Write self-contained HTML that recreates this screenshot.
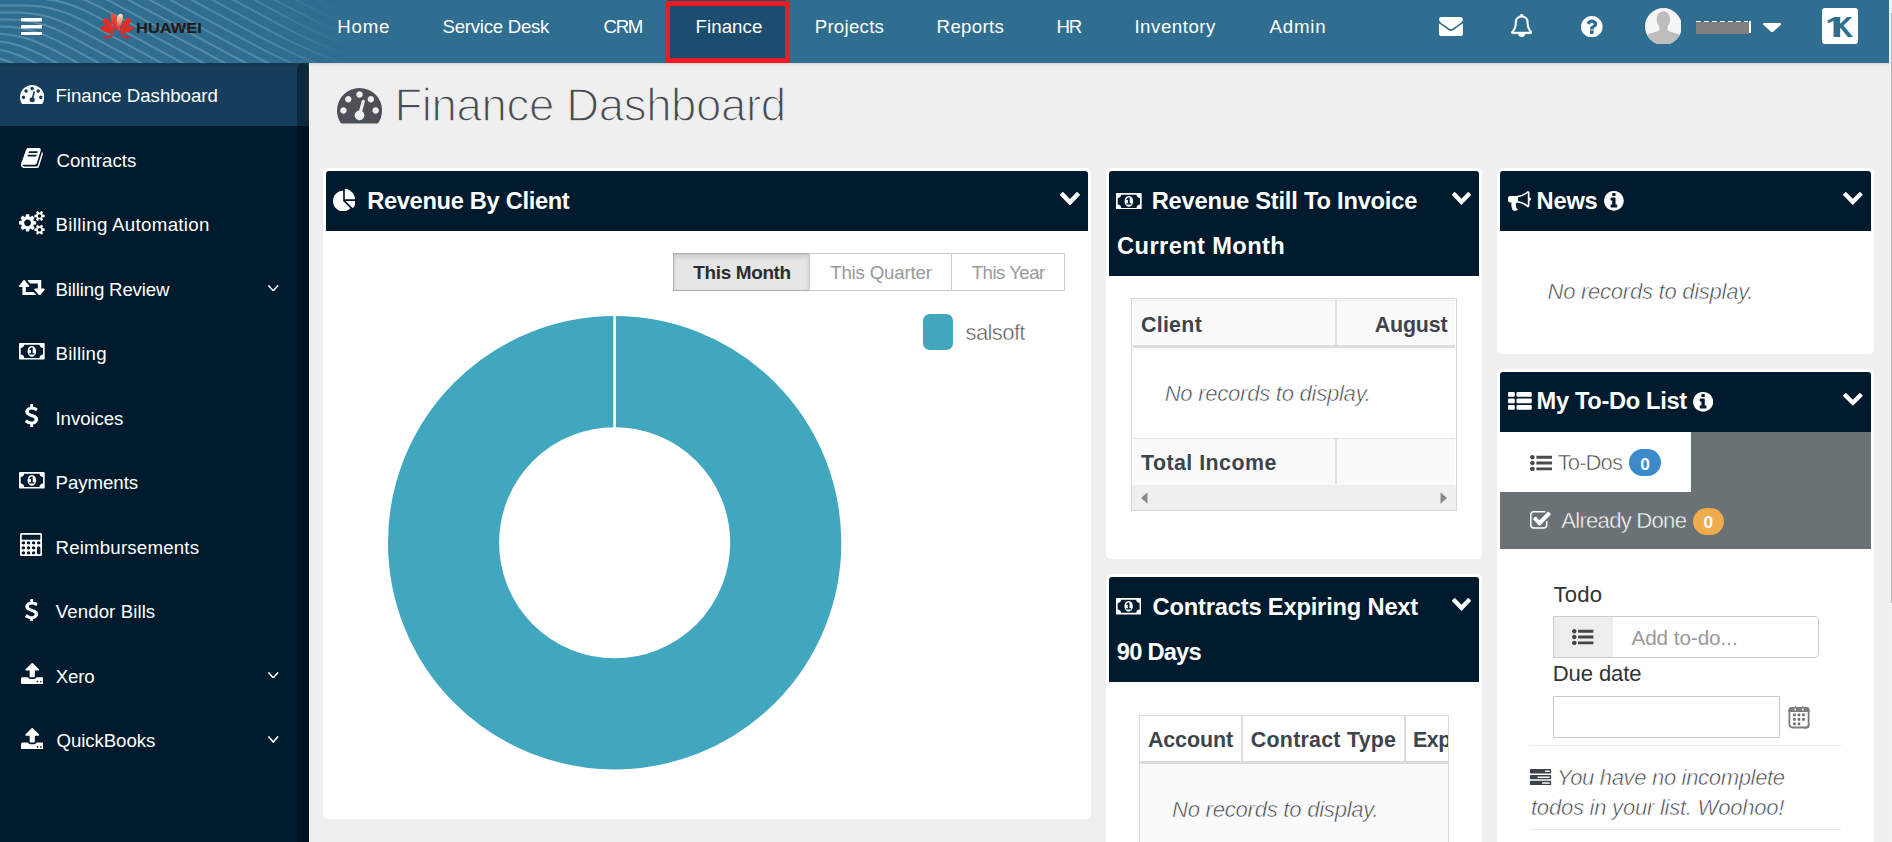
<!DOCTYPE html>
<html lang="en"><head><meta charset="utf-8"><title>Finance Dashboard</title>
<style>
html,body{margin:0;padding:0}
body{width:1892px;height:842px;overflow:hidden;position:relative;background:#efefef;font-family:"Liberation Sans",Arial,sans-serif}
.abs,.t,.ic,.pnl,.ph,.btn{position:absolute;box-sizing:border-box}
.ic{display:block;overflow:hidden}
.t{white-space:nowrap;margin:0;padding:0;display:block;text-decoration:none}
#hdr{position:absolute;left:0;top:0;width:1889px;height:63px;background:#2f6e91;box-shadow:0 1px 3px rgba(0,0,0,.14)}
#side{position:absolute;left:0;top:63px;width:309px;height:779px;background:#001b2e}
#edge{position:absolute;left:1889px;top:0;width:3px;height:842px;background:#f1f1f1}
.pnl{background:#fff;border-radius:5px}
.ph{background:#001b2e;border-radius:3px 3px 0 0}
.btn{background:#fff;border:1px solid #ccc;box-sizing:content-box}
.btn.on{background:#e6e6e6;border-color:#adadad;box-shadow:inset 0 3px 5px rgba(0,0,0,.125)}
.thin{-webkit-text-stroke:1.35px #efefef}
</style></head>
<body>
<main id="main"><svg class="ic" style="left:337.3px;top:88.4px;width:45.1px;height:35.4px;" viewBox="0 -1280 1792 1408" preserveAspectRatio="none"><path fill="#4d5157" transform="scale(1,-1)" d="M384 384q0 53 -37.5 90.5t-90.5 37.5t-90.5 -37.5t-37.5 -90.5t37.5 -90.5t90.5 -37.5t90.5 37.5t37.5 90.5zM576 832q0 53 -37.5 90.5t-90.5 37.5t-90.5 -37.5t-37.5 -90.5t37.5 -90.5t90.5 -37.5t90.5 37.5t37.5 90.5zM1004 351l101 382q6 26 -7.5 48.5t-38.5 29.5 t-48 -6.5t-30 -39.5l-101 -382q-60 -5 -107 -43.5t-63 -98.5q-20 -77 20 -146t117 -89t146 20t89 117q16 60 -6 117t-72 91zM1664 384q0 53 -37.5 90.5t-90.5 37.5t-90.5 -37.5t-37.5 -90.5t37.5 -90.5t90.5 -37.5t90.5 37.5t37.5 90.5zM1024 1024q0 53 -37.5 90.5 t-90.5 37.5t-90.5 -37.5t-37.5 -90.5t37.5 -90.5t90.5 -37.5t90.5 37.5t37.5 90.5zM1472 832q0 53 -37.5 90.5t-90.5 37.5t-90.5 -37.5t-37.5 -90.5t37.5 -90.5t90.5 -37.5t90.5 37.5t37.5 90.5zM1792 384q0 -261 -141 -483q-19 -29 -54 -29h-1402q-35 0 -54 29 q-141 221 -141 483q0 182 71 348t191 286t286 191t348 71t348 -71t286 -191t191 -286t71 -348z"/></svg>
<h1 class="t thin" style="left:394.4px;top:76px;font-size:45.54px;line-height:60px;color:#474c54;letter-spacing:-0.35px;font-weight:400;">Finance Dashboard</h1>
<section>
<div class="pnl" style="left:323px;top:168px;width:768px;height:651px"></div><div class="ph" style="left:326px;top:171px;width:762px;height:60px"></div>
<svg class="ic" style="left:332.7px;top:188.9px;width:22.8px;height:22.3px;" viewBox="0 -1536 1728 1664" preserveAspectRatio="none"><path fill="#fff" transform="scale(1,-1)" d="M768 646l546 -546q-106 -108 -247.5 -168t-298.5 -60q-209 0 -385.5 103t-279.5 279.5t-103 385.5t103 385.5t279.5 279.5t385.5 103v-762zM955 640h773q0 -157 -60 -298.5t-168 -247.5zM1664 768h-768v768q209 0 385.5 -103t279.5 -279.5t103 -385.5z"/></svg>
<h3 class="t" style="left:367.2px;top:186px;font-size:23.69px;line-height:31px;color:#fff;letter-spacing:-0.34px;font-weight:700;">Revenue By Client</h3>
<svg class="ic" style="left:1060px;top:191.6px;width:19.9px;height:13.2px;" viewBox="90 -1003 1612 1035" preserveAspectRatio="none"><path fill="#fff" transform="scale(1,-1)" d="M1683 728l-742 -741q-19 -19 -45 -19t-45 19l-742 741q-19 19 -19 45.5t19 45.5l166 165q19 19 45 19t45 -19l531 -531l531 531q19 19 45 19t45 -19l166 -165q19 -19 19 -45.5t-19 -45.5z"/></svg>
<div class="btn on" style="left:673px;top:253px;width:135px;height:36px"></div>
<div class="btn" style="left:809px;top:253px;width:142px;height:36px"></div>
<div class="btn" style="left:951px;top:253px;width:112px;height:36px"></div>
<div class="t" style="left:693.3px;top:260px;font-size:18.95px;line-height:25px;color:#2c2c2c;letter-spacing:-0.35px;font-weight:700;">This Month</div>
<div class="t" style="left:830.2px;top:260px;font-size:18.67px;line-height:25px;color:#999;letter-spacing:-0.17px;">This Quarter</div>
<div class="t" style="left:971.7px;top:260px;font-size:18.67px;line-height:25px;color:#999;letter-spacing:-0.53px;">This Year</div>
<div class="abs" style="left:923px;top:314px;width:30px;height:36px;border-radius:6.5px;background:#40a7bf"></div>
<div class="t" style="left:965.6px;top:318px;font-size:22.08px;line-height:29px;color:#4a4a4a;letter-spacing:-0.65px;-webkit-text-stroke:0.55px #fff;">salsoft</div>
<svg class="ic" style="left:380px;top:308px;width:470px;height:470px" viewBox="380 308 470 470"><circle cx="614.65" cy="542.75" r="171.1" fill="none" stroke="#40a7bf" stroke-width="111.1"/><rect x="613.3" y="314" width="2.6" height="114" fill="#fff"/></svg>
</section>
<section>
<div class="pnl" style="left:1106px;top:168px;width:376px;height:391px"></div><div class="ph" style="left:1109px;top:171px;width:370px;height:105px"></div>
<svg class="ic" style="left:1115.9px;top:192.8px;width:25.7px;height:16.6px;" viewBox="0 -1280 1920 1280" preserveAspectRatio="none"><path fill="#fff" transform="scale(1,-1)" d="M768 384h384v96h-128v448h-114l-148 -137l77 -80q42 37 55 57h2v-288h-128v-96zM1280 640q0 -70 -21 -142t-59.5 -134t-101.5 -101t-138 -39t-138 39t-101.5 101t-59.5 134t-21 142t21 142t59.5 134t101.5 101t138 39t138 -39t101.5 -101t59.5 -134t21 -142zM1792 384 v512q-106 0 -181 75t-75 181h-1152q0 -106 -75 -181t-181 -75v-512q106 0 181 -75t75 -181h1152q0 106 75 181t181 75zM1920 1216v-1152q0 -26 -19 -45t-45 -19h-1792q-26 0 -45 19t-19 45v1152q0 26 19 45t45 19h1792q26 0 45 -19t19 -45z"/></svg>
<h3 class="t" style="left:1151.7px;top:186px;font-size:23.69px;line-height:31px;color:#fff;letter-spacing:-0.22px;font-weight:700;">Revenue Still To Invoice</h3>
<div class="t" style="left:1117.1px;top:231px;font-size:23.69px;line-height:31px;color:#fff;letter-spacing:0.38px;font-weight:700;">Current Month</div>
<svg class="ic" style="left:1452px;top:192.1px;width:19px;height:12.7px;" viewBox="90 -1003 1612 1035" preserveAspectRatio="none"><path fill="#fff" transform="scale(1,-1)" d="M1683 728l-742 -741q-19 -19 -45 -19t-45 19l-742 741q-19 19 -19 45.5t19 45.5l166 165q19 19 45 19t45 -19l531 -531l531 531q19 19 45 19t45 -19l166 -165q19 -19 19 -45.5t-19 -45.5z"/></svg>
<div class="abs" style="left:1131px;top:298px;width:326px;height:212.5px;border:1px solid #d6d6d6;background:#fff"></div>
<div class="abs" style="left:1133px;top:300px;width:322px;height:46px;background:#fafafa;border-top:1px solid #e8e8e8"></div>
<div class="abs" style="left:1133px;top:345.4px;width:322px;height:2.4px;background:#dcdcdc"></div>
<div class="abs" style="left:1335px;top:300px;width:2px;height:46px;background:#dedede"></div>
<div class="abs" style="left:1133px;top:438px;width:322px;height:46.5px;background:#fafafa;border-top:1px solid #dedede"></div>
<div class="abs" style="left:1335px;top:438px;width:2px;height:46px;background:#dedede"></div>
<div class="abs" style="left:1132px;top:484.6px;width:324px;height:25.4px;background:#efefef"></div>
<svg class="ic" style="left:1132px;top:484.6px;width:324px;height:25.4px" viewBox="0 0 324 25.4"><path fill="#8a8a8a" d="M15.4 7.3 v11.4 l-6.400-5.700z M308.6 7.3 v11.4 l6.400-5.700z"/></svg>
<div class="t" style="left:1140.9px;top:311px;font-size:21.4px;line-height:28px;color:#3c444c;letter-spacing:0.3px;font-weight:700;">Client</div>
<div class="t" style="left:1374.8px;top:311px;font-size:21.4px;line-height:28px;color:#3c444c;letter-spacing:-0.17px;font-weight:700;">August</div>
<div class="t" style="left:1164.7px;top:379px;font-size:22.08px;line-height:29px;color:#3f454b;letter-spacing:-0.27px;font-style:italic;-webkit-text-stroke:0.55px #fff;">No records to display.</div>
<div class="t" style="left:1141px;top:449px;font-size:21.4px;line-height:28px;color:#3c444c;letter-spacing:0.45px;font-weight:700;">Total Income</div>
</section>
<section>
<div class="pnl" style="left:1106px;top:574px;width:376px;height:286px"></div><div class="ph" style="left:1109px;top:577px;width:370px;height:105px"></div>
<svg class="ic" style="left:1116.1px;top:598.3px;width:25.3px;height:16.5px;" viewBox="0 -1280 1920 1280" preserveAspectRatio="none"><path fill="#fff" transform="scale(1,-1)" d="M768 384h384v96h-128v448h-114l-148 -137l77 -80q42 37 55 57h2v-288h-128v-96zM1280 640q0 -70 -21 -142t-59.5 -134t-101.5 -101t-138 -39t-138 39t-101.5 101t-59.5 134t-21 142t21 142t59.5 134t101.5 101t138 39t138 -39t101.5 -101t59.5 -134t21 -142zM1792 384 v512q-106 0 -181 75t-75 181h-1152q0 -106 -75 -181t-181 -75v-512q106 0 181 -75t75 -181h1152q0 106 75 181t181 75zM1920 1216v-1152q0 -26 -19 -45t-45 -19h-1792q-26 0 -45 19t-19 45v1152q0 26 19 45t45 19h1792q26 0 45 -19t19 -45z"/></svg>
<h3 class="t" style="left:1152.6px;top:592px;font-size:23.69px;line-height:31px;color:#fff;letter-spacing:-0.19px;font-weight:700;">Contracts Expiring Next</h3>
<div class="t" style="left:1116.8px;top:637px;font-size:23.69px;line-height:31px;color:#fff;letter-spacing:-0.78px;font-weight:700;">90 Days</div>
<svg class="ic" style="left:1452px;top:598.3px;width:19px;height:12.7px;" viewBox="90 -1003 1612 1035" preserveAspectRatio="none"><path fill="#fff" transform="scale(1,-1)" d="M1683 728l-742 -741q-19 -19 -45 -19t-45 19l-742 741q-19 19 -19 45.5t19 45.5l166 165q19 19 45 19t45 -19l531 -531l531 531q19 19 45 19t45 -19l166 -165q19 -19 19 -45.5t-19 -45.5z"/></svg>
<div class="abs" style="left:1139px;top:715px;width:310px;height:140px;border:1px solid #dcdcdc;background:#fafafa"></div>
<div class="abs" style="left:1140px;top:716px;width:308px;height:45px;background:#fff"></div>
<div class="abs" style="left:1140px;top:761px;width:308px;height:2.6px;background:#dcdcdc"></div>
<div class="abs" style="left:1241px;top:716px;width:1.6px;height:45px;background:#dedede"></div>
<div class="abs" style="left:1404px;top:716px;width:1.6px;height:45px;background:#dedede"></div>
<div class="t" style="left:1147.9px;top:726px;font-size:21.4px;line-height:28px;color:#3c444c;letter-spacing:-0.06px;font-weight:700;">Account</div>
<div class="t" style="left:1250.8px;top:726px;font-size:21.4px;line-height:28px;color:#3c444c;letter-spacing:0.25px;font-weight:700;">Contract Type</div>
<div class="abs" style="left:1406px;top:716px;width:42px;height:45px;overflow:hidden"><div class="t" style="left:6.9px;top:10px;font-size:21.4px;line-height:28px;color:#3c444c;letter-spacing:-0.35px;font-weight:700;">Expiry</div></div>
<div class="t" style="left:1172px;top:795px;font-size:22.08px;line-height:29px;color:#3f454b;letter-spacing:-0.25px;font-style:italic;-webkit-text-stroke:0.55px #fafafa;">No records to display.</div>
</section>
<section>
<div class="pnl" style="left:1497px;top:168px;width:377px;height:186px"></div><div class="ph" style="left:1500px;top:171px;width:371px;height:60px"></div>
<svg class="ic" style="left:1507.8px;top:190.9px;width:23.1px;height:19.7px;" viewBox="0 -1408 1792 1537.2" preserveAspectRatio="none"><path fill="#fff" transform="scale(1,-1)" d="M1664 896q53 0 90.5 -37.5t37.5 -90.5t-37.5 -90.5t-90.5 -37.5v-384q0 -52 -38 -90t-90 -38q-417 347 -812 380q-58 -19 -91 -66t-31 -100.5t40 -92.5q-20 -33 -23 -65.5t6 -58t33.5 -55t48 -50t61.5 -50.5q-29 -58 -111.5 -83t-168.5 -11.5t-132 55.5q-7 23 -29.5 87.5 t-32 94.5t-23 89t-15 101t3.5 98.5t22 110.5h-122q-66 0 -113 47t-47 113v192q0 66 47 113t113 47h480q435 0 896 384q52 0 90 -38t38 -90v-384zM1536 292v954q-394 -302 -768 -343v-270q377 -42 768 -341z"/></svg>
<h3 class="t" style="left:1536.5px;top:186px;font-size:23.69px;line-height:31px;color:#fff;letter-spacing:-0.2px;font-weight:700;">News</h3>
<svg class="ic" style="left:1604px;top:190.9px;width:19.8px;height:19.7px;" viewBox="0 -1408 1536 1536" preserveAspectRatio="none"><path fill="#fff" transform="scale(1,-1)" d="M1024 160v160q0 14 -9 23t-23 9h-96v512q0 14 -9 23t-23 9h-320q-14 0 -23 -9t-9 -23v-160q0 -14 9 -23t23 -9h96v-320h-96q-14 0 -23 -9t-9 -23v-160q0 -14 9 -23t23 -9h448q14 0 23 9t9 23zM896 1056v160q0 14 -9 23t-23 9h-192q-14 0 -23 -9t-9 -23v-160q0 -14 9 -23 t23 -9h192q14 0 23 9t9 23zM1536 640q0 -209 -103 -385.5t-279.5 -279.5t-385.5 -103t-385.5 103t-279.5 279.5t-103 385.5t103 385.5t279.5 279.5t385.5 103t385.5 -103t279.5 -279.5t103 -385.5z"/></svg>
<svg class="ic" style="left:1843.3px;top:192.1px;width:19.7px;height:12.7px;" viewBox="90 -1003 1612 1035" preserveAspectRatio="none"><path fill="#fff" transform="scale(1,-1)" d="M1683 728l-742 -741q-19 -19 -45 -19t-45 19l-742 741q-19 19 -19 45.5t19 45.5l166 165q19 19 45 19t45 -19l531 -531l531 531q19 19 45 19t45 -19l166 -165q19 -19 19 -45.5t-19 -45.5z"/></svg>
<div class="t" style="left:1547.5px;top:277px;font-size:22.08px;line-height:29px;color:#3f454b;letter-spacing:-0.28px;font-style:italic;-webkit-text-stroke:0.55px #fff;">No records to display.</div>
</section>
<section>
<div class="pnl" style="left:1497px;top:369px;width:377px;height:491px"></div><div class="ph" style="left:1500px;top:372px;width:371px;height:60px"></div>
<svg class="ic" style="left:1507.8px;top:392.1px;width:23.8px;height:17.8px;" viewBox="0 -1408 1792 1408" preserveAspectRatio="none"><path fill="#fff" transform="scale(1,-1)" d="M512 288v-192q0 -40 -28 -68t-68 -28h-320q-40 0 -68 28t-28 68v192q0 40 28 68t68 28h320q40 0 68 -28t28 -68zM512 800v-192q0 -40 -28 -68t-68 -28h-320q-40 0 -68 28t-28 68v192q0 40 28 68t68 28h320q40 0 68 -28t28 -68zM1792 288v-192q0 -40 -28 -68t-68 -28h-960 q-40 0 -68 28t-28 68v192q0 40 28 68t68 28h960q40 0 68 -28t28 -68zM512 1312v-192q0 -40 -28 -68t-68 -28h-320q-40 0 -68 28t-28 68v192q0 40 28 68t68 28h320q40 0 68 -28t28 -68zM1792 800v-192q0 -40 -28 -68t-68 -28h-960q-40 0 -68 28t-28 68v192q0 40 28 68t68 28 h960q40 0 68 -28t28 -68zM1792 1312v-192q0 -40 -28 -68t-68 -28h-960q-40 0 -68 28t-28 68v192q0 40 28 68t68 28h960q40 0 68 -28t28 -68z"/></svg>
<h3 class="t" style="left:1536.5px;top:386px;font-size:23.69px;line-height:31px;color:#fff;letter-spacing:-0.35px;font-weight:700;">My To-Do List</h3>
<svg class="ic" style="left:1692.7px;top:392.1px;width:20.2px;height:19.7px;" viewBox="0 -1408 1536 1536" preserveAspectRatio="none"><path fill="#fff" transform="scale(1,-1)" d="M1024 160v160q0 14 -9 23t-23 9h-96v512q0 14 -9 23t-23 9h-320q-14 0 -23 -9t-9 -23v-160q0 -14 9 -23t23 -9h96v-320h-96q-14 0 -23 -9t-9 -23v-160q0 -14 9 -23t23 -9h448q14 0 23 9t9 23zM896 1056v160q0 14 -9 23t-23 9h-192q-14 0 -23 -9t-9 -23v-160q0 -14 9 -23 t23 -9h192q14 0 23 9t9 23zM1536 640q0 -209 -103 -385.5t-279.5 -279.5t-385.5 -103t-385.5 103t-279.5 279.5t-103 385.5t103 385.5t279.5 279.5t385.5 103t385.5 -103t279.5 -279.5t103 -385.5z"/></svg>
<svg class="ic" style="left:1843.3px;top:393.3px;width:19.7px;height:12.5px;" viewBox="90 -1003 1612 1035" preserveAspectRatio="none"><path fill="#fff" transform="scale(1,-1)" d="M1683 728l-742 -741q-19 -19 -45 -19t-45 19l-742 741q-19 19 -19 45.5t19 45.5l166 165q19 19 45 19t45 -19l531 -531l531 531q19 19 45 19t45 -19l166 -165q19 -19 19 -45.5t-19 -45.5z"/></svg>
<div class="abs" style="left:1500px;top:432px;width:371px;height:117px;background:#6a7275"></div>
<div class="abs" style="left:1500px;top:432px;width:191px;height:60px;background:#fff"></div>
<svg class="ic" style="left:1529.9px;top:454.6px;width:22.3px;height:16.1px;" viewBox="0 -1344 1792 1408" preserveAspectRatio="none"><path fill="#4a4a4a" transform="scale(1,-1)" d="M384 128q0 -80 -56 -136t-136 -56t-136 56t-56 136t56 136t136 56t136 -56t56 -136zM384 640q0 -80 -56 -136t-136 -56t-136 56t-56 136t56 136t136 56t136 -56t56 -136zM1792 224v-192q0 -13 -9.5 -22.5t-22.5 -9.5h-1216q-13 0 -22.5 9.5t-9.5 22.5v192q0 13 9.5 22.5 t22.5 9.5h1216q13 0 22.5 -9.5t9.5 -22.5zM384 1152q0 -80 -56 -136t-136 -56t-136 56t-56 136t56 136t136 56t136 -56t56 -136zM1792 736v-192q0 -13 -9.5 -22.5t-22.5 -9.5h-1216q-13 0 -22.5 9.5t-9.5 22.5v192q0 13 9.5 22.5t22.5 9.5h1216q13 0 22.5 -9.5t9.5 -22.5z M1792 1248v-192q0 -13 -9.5 -22.5t-22.5 -9.5h-1216q-13 0 -22.5 9.5t-9.5 22.5v192q0 13 9.5 22.5t22.5 9.5h1216q13 0 22.5 -9.5t9.5 -22.5z"/></svg>
<div class="t" style="left:1557.7px;top:448px;font-size:22.08px;line-height:29px;color:#4a4a4a;letter-spacing:-0.92px;-webkit-text-stroke:0.55px #fff;">To-Dos</div>
<div class="abs" style="left:1629px;top:449px;width:32px;height:27px;border-radius:14px;background:#3d8acb"></div>
<div class="t" style="left:1640.2px;top:453px;font-size:17.25px;line-height:23px;color:#fff;font-weight:700;">0</div>
<svg class="ic" style="left:1529.9px;top:510.9px;width:20.7px;height:17.8px;" viewBox="0 -1408 1663 1408" preserveAspectRatio="none"><path fill="#fff" transform="scale(1,-1)" d="M1408 606v-318q0 -119 -84.5 -203.5t-203.5 -84.5h-832q-119 0 -203.5 84.5t-84.5 203.5v832q0 119 84.5 203.5t203.5 84.5h832q63 0 117 -25q15 -7 18 -23q3 -17 -9 -29l-49 -49q-10 -10 -23 -10q-3 0 -9 2q-23 6 -45 6h-832q-66 0 -113 -47t-47 -113v-832 q0 -66 47 -113t113 -47h832q66 0 113 47t47 113v254q0 13 9 22l64 64q10 10 23 10q6 0 12 -3q20 -8 20 -29zM1639 1095l-814 -814q-24 -24 -57 -24t-57 24l-430 430q-24 24 -24 57t24 57l110 110q24 24 57 24t57 -24l263 -263l647 647q24 24 57 24t57 -24l110 -110 q24 -24 24 -57t-24 -57z"/></svg>
<div class="t" style="left:1561.3px;top:506px;font-size:22.08px;line-height:29px;color:#fff;letter-spacing:-0.74px;-webkit-text-stroke:0.5px #6a7275;">Already Done</div>
<div class="abs" style="left:1693px;top:508px;width:31px;height:27px;border-radius:14px;background:#efab4c"></div>
<div class="t" style="left:1703.4px;top:511px;font-size:17.25px;line-height:23px;color:#fff;font-weight:700;">0</div>
<div class="t" style="left:1553.4px;top:580px;font-size:22.08px;line-height:29px;color:#333;letter-spacing:0.23px;">Todo</div>
<div class="abs" style="left:1553px;top:616.3px;width:60.5px;height:41.4px;border:1px solid #ccc;background:#eee"></div>
<div class="abs" style="left:1613px;top:616.3px;width:206px;height:41.4px;border:1px solid #ccc;border-left:0;background:#fff;border-radius:0 5px 5px 0"></div>
<svg class="ic" style="left:1572.4px;top:629.4px;width:21.4px;height:16.1px;" viewBox="0 -1344 1792 1408" preserveAspectRatio="none"><path fill="#444" transform="scale(1,-1)" d="M384 128q0 -80 -56 -136t-136 -56t-136 56t-56 136t56 136t136 56t136 -56t56 -136zM384 640q0 -80 -56 -136t-136 -56t-136 56t-56 136t56 136t136 56t136 -56t56 -136zM1792 224v-192q0 -13 -9.5 -22.5t-22.5 -9.5h-1216q-13 0 -22.5 9.5t-9.5 22.5v192q0 13 9.5 22.5 t22.5 9.5h1216q13 0 22.5 -9.5t9.5 -22.5zM384 1152q0 -80 -56 -136t-136 -56t-136 56t-56 136t56 136t136 56t136 -56t56 -136zM1792 736v-192q0 -13 -9.5 -22.5t-22.5 -9.5h-1216q-13 0 -22.5 9.5t-9.5 22.5v192q0 13 9.5 22.5t22.5 9.5h1216q13 0 22.5 -9.5t9.5 -22.5z M1792 1248v-192q0 -13 -9.5 -22.5t-22.5 -9.5h-1216q-13 0 -22.5 9.5t-9.5 22.5v192q0 13 9.5 22.5t22.5 9.5h1216q13 0 22.5 -9.5t9.5 -22.5z"/></svg>
<div class="t" style="left:1631.4px;top:624px;font-size:20.7px;line-height:27px;color:#999;letter-spacing:-0.06px;">Add to-do...</div>
<div class="t" style="left:1552.7px;top:659px;font-size:22.08px;line-height:29px;color:#333;letter-spacing:-0.1px;">Due date</div>
<div class="abs" style="left:1553px;top:696px;width:227px;height:41.7px;border:1px solid #c9c9c9;background:#fff"></div>
<svg class="ic" style="left:1788px;top:706px;width:22px;height:23px" viewBox="0 0 22 23"><rect x="1.4" y="1.9" width="19.2" height="19.6" rx="3" fill="#fff" stroke="#7c7c7c" stroke-width="1.8"/><path fill="#7c7c7c" d="M.5 5.9 V4 a3 3 0 0 1 3-3 h15 a3 3 0 0 1 3 3 V5.900z M21.5 16.5 Q20.5 20.8 15.5 22.4 H18.5 a3 3 0 0 0 3-3z"/><path fill="#7c7c7c" d="M6.7 0h1v2h-1z M14.3 0h1v2h-1z"/><circle cx="7.2" cy="3.5" r=".95" fill="#fff"/><circle cx="14.8" cy="3.5" r=".95" fill="#fff"/><g fill="#6a6a6a"><rect x="5.16" y="7.56" width="2.6" height="2.6" rx=".4"/><rect x="9.67" y="7.56" width="2.6" height="2.6" rx=".4"/><rect x="14.18" y="7.56" width="2.6" height="2.6" rx=".4"/><rect x="5.16" y="12.07" width="2.6" height="2.6" rx=".4"/><rect x="9.67" y="12.07" width="2.6" height="2.6" rx=".4"/><rect x="14.18" y="12.07" width="2.6" height="2.6" rx=".4"/><rect x="5.16" y="16.58" width="2.6" height="2.6" rx=".4"/><rect x="9.67" y="16.58" width="2.6" height="2.6" rx=".4"/></g></svg>
<div class="abs" style="left:1530px;top:744.8px;width:311px;height:1px;background:#e9e9e9"></div>
<svg class="ic" style="left:1530.4px;top:768.7px;width:21.2px;height:16.3px;" viewBox="0 -1408 1792 1408" preserveAspectRatio="none"><path fill="#3b424a" transform="scale(1,-1)" d="M1024 128h640v128h-640v-128zM640 640h1024v128h-1024v-128zM1280 1152h384v128h-384v-128zM1792 320v-256q0 -26 -19 -45t-45 -19h-1664q-26 0 -45 19t-19 45v256q0 26 19 45t45 19h1664q26 0 45 -19t19 -45zM1792 832v-256q0 -26 -19 -45t-45 -19h-1664q-26 0 -45 19 t-19 45v256q0 26 19 45t45 19h1664q26 0 45 -19t19 -45zM1792 1344v-256q0 -26 -19 -45t-45 -19h-1664q-26 0 -45 19t-19 45v256q0 26 19 45t45 19h1664q26 0 45 -19t19 -45z"/></svg>
<div class="t" style="left:1557px;top:763px;font-size:22.08px;line-height:29px;color:#3f454b;letter-spacing:-0.36px;font-style:italic;-webkit-text-stroke:0.55px #fff;">You have no incomplete</div>
<div class="t" style="left:1531px;top:793px;font-size:22.08px;line-height:29px;color:#3f454b;letter-spacing:-0.26px;font-style:italic;-webkit-text-stroke:0.55px #fff;">todos in your list. Woohoo!</div>
<div class="abs" style="left:1530px;top:829px;width:311px;height:1px;background:#e9e9e9"></div>
</section></main>
<aside>
<div id="side">
<div class="abs" style="left:0;top:0;width:309px;height:63px;background:#163d5b"></div>
<div class="abs" style="left:297px;top:0;width:12px;height:790px;background:rgba(0,0,0,.32);border-radius:6px 6px 0 0"></div>
</div>
<div class="abs" style="left:309px;top:63px;width:1px;height:779px;background:#fafafa"></div>
<svg class="ic" style="left:19.7px;top:84.9px;width:24.3px;height:19.1px;" viewBox="0 -1280 1792 1408" preserveAspectRatio="none"><path fill="#fff" transform="scale(1,-1)" d="M384 384q0 53 -37.5 90.5t-90.5 37.5t-90.5 -37.5t-37.5 -90.5t37.5 -90.5t90.5 -37.5t90.5 37.5t37.5 90.5zM576 832q0 53 -37.5 90.5t-90.5 37.5t-90.5 -37.5t-37.5 -90.5t37.5 -90.5t90.5 -37.5t90.5 37.5t37.5 90.5zM1004 351l101 382q6 26 -7.5 48.5t-38.5 29.5 t-48 -6.5t-30 -39.5l-101 -382q-60 -5 -107 -43.5t-63 -98.5q-20 -77 20 -146t117 -89t146 20t89 117q16 60 -6 117t-72 91zM1664 384q0 53 -37.5 90.5t-90.5 37.5t-90.5 -37.5t-37.5 -90.5t37.5 -90.5t90.5 -37.5t90.5 37.5t37.5 90.5zM1024 1024q0 53 -37.5 90.5 t-90.5 37.5t-90.5 -37.5t-37.5 -90.5t37.5 -90.5t90.5 -37.5t90.5 37.5t37.5 90.5zM1472 832q0 53 -37.5 90.5t-90.5 37.5t-90.5 -37.5t-37.5 -90.5t37.5 -90.5t90.5 -37.5t90.5 37.5t37.5 90.5zM1792 384q0 -261 -141 -483q-19 -29 -54 -29h-1402q-35 0 -54 29 q-141 221 -141 483q0 182 71 348t191 286t286 191t348 71t348 -71t286 -191t191 -286t71 -348z"/></svg>
<a class="t" style="left:55.5px;top:83px;font-size:18.67px;line-height:25px;color:#fff;letter-spacing:-0.03px;font-weight:400;">Finance Dashboard</a>
<svg class="ic" style="left:20.9px;top:147.9px;width:21.9px;height:20.2px;" viewBox="-0.5 -1408 1665.3 1536" preserveAspectRatio="none"><path fill="#fff" transform="scale(1,-1)" d="M1639 1058q40 -57 18 -129l-275 -906q-19 -64 -76.5 -107.5t-122.5 -43.5h-923q-77 0 -148.5 53.5t-99.5 131.5q-24 67 -2 127q0 4 3 27t4 37q1 8 -3 21.5t-3 19.5q2 11 8 21t16.5 23.5t16.5 23.5q23 38 45 91.5t30 91.5q3 10 0.5 30t-0.5 28q3 11 17 28t17 23 q21 36 42 92t25 90q1 9 -2.5 32t0.5 28q4 13 22 30.5t22 22.5q19 26 42.5 84.5t27.5 96.5q1 8 -3 25.5t-2 26.5q2 8 9 18t18 23t17 21q8 12 16.5 30.5t15 35t16 36t19.5 32t26.5 23.5t36 11.5t47.5 -5.5l-1 -3q38 9 51 9h761q74 0 114 -56t18 -130l-274 -906 q-36 -119 -71.5 -153.5t-128.5 -34.5h-869q-27 0 -38 -15q-11 -16 -1 -43q24 -70 144 -70h923q29 0 56 15.5t35 41.5l300 987q7 22 5 57q38 -15 59 -43zM575 1056q-4 -13 2 -22.5t20 -9.5h608q13 0 25.5 9.5t16.5 22.5l21 64q4 13 -2 22.5t-20 9.5h-608q-13 0 -25.5 -9.5 t-16.5 -22.5zM492 800q-4 -13 2 -22.5t20 -9.5h608q13 0 25.5 9.5t16.5 22.5l21 64q4 13 -2 22.5t-20 9.5h-608q-13 0 -25.5 -9.5t-16.5 -22.5z"/></svg>
<a class="t" style="left:56.5px;top:148px;font-size:18.67px;line-height:25px;color:#fff;letter-spacing:-0.01px;font-weight:400;">Contracts</a>
<svg class="ic" style="left:19px;top:210.9px;width:25.7px;height:23.7px;" viewBox="0 -1520 1920 1761" preserveAspectRatio="none"><path fill="#fff" transform="scale(1,-1)" d="M896 640q0 106 -75 181t-181 75t-181 -75t-75 -181t75 -181t181 -75t181 75t75 181zM1664 128q0 52 -38 90t-90 38t-90 -38t-38 -90q0 -53 37.5 -90.5t90.5 -37.5t90.5 37.5t37.5 90.5zM1664 1152q0 52 -38 90t-90 38t-90 -38t-38 -90q0 -53 37.5 -90.5t90.5 -37.5 t90.5 37.5t37.5 90.5zM1280 731v-185q0 -10 -7 -19.5t-16 -10.5l-155 -24q-11 -35 -32 -76q34 -48 90 -115q7 -11 7 -20q0 -12 -7 -19q-23 -30 -82.5 -89.5t-78.5 -59.5q-11 0 -21 7l-115 90q-37 -19 -77 -31q-11 -108 -23 -155q-7 -24 -30 -24h-186q-11 0 -20 7.5t-10 17.5 l-23 153q-34 10 -75 31l-118 -89q-7 -7 -20 -7q-11 0 -21 8q-144 133 -144 160q0 9 7 19q10 14 41 53t47 61q-23 44 -35 82l-152 24q-10 1 -17 9.5t-7 19.5v185q0 10 7 19.5t16 10.5l155 24q11 35 32 76q-34 48 -90 115q-7 11 -7 20q0 12 7 20q22 30 82 89t79 59q11 0 21 -7 l115 -90q34 18 77 32q11 108 23 154q7 24 30 24h186q11 0 20 -7.5t10 -17.5l23 -153q34 -10 75 -31l118 89q8 7 20 7q11 0 21 -8q144 -133 144 -160q0 -8 -7 -19q-12 -16 -42 -54t-45 -60q23 -48 34 -82l152 -23q10 -2 17 -10.5t7 -19.5zM1920 198v-140q0 -16 -149 -31 q-12 -27 -30 -52q51 -113 51 -138q0 -4 -4 -7q-122 -71 -124 -71q-8 0 -46 47t-52 68q-20 -2 -30 -2t-30 2q-14 -21 -52 -68t-46 -47q-2 0 -124 71q-4 3 -4 7q0 25 51 138q-18 25 -30 52q-149 15 -149 31v140q0 16 149 31q13 29 30 52q-51 113 -51 138q0 4 4 7q4 2 35 20 t59 34t30 16q8 0 46 -46.5t52 -67.5q20 2 30 2t30 -2q51 71 92 112l6 2q4 0 124 -70q4 -3 4 -7q0 -25 -51 -138q17 -23 30 -52q149 -15 149 -31zM1920 1222v-140q0 -16 -149 -31q-12 -27 -30 -52q51 -113 51 -138q0 -4 -4 -7q-122 -71 -124 -71q-8 0 -46 47t-52 68 q-20 -2 -30 -2t-30 2q-14 -21 -52 -68t-46 -47q-2 0 -124 71q-4 3 -4 7q0 25 51 138q-18 25 -30 52q-149 15 -149 31v140q0 16 149 31q13 29 30 52q-51 113 -51 138q0 4 4 7q4 2 35 20t59 34t30 16q8 0 46 -46.5t52 -67.5q20 2 30 2t30 -2q51 71 92 112l6 2q4 0 124 -70 q4 -3 4 -7q0 -25 -51 -138q17 -23 30 -52q149 -15 149 -31z"/></svg>
<a class="t" style="left:55.5px;top:212px;font-size:18.67px;line-height:25px;color:#fff;letter-spacing:0.33px;font-weight:400;">Billing Automation</a>
<svg class="ic" style="left:19px;top:279.9px;width:25.7px;height:15.5px;" viewBox="0 -1152 1920 1152" preserveAspectRatio="none"><path fill="#fff" transform="scale(1,-1)" d="M1280 32q0 -13 -9.5 -22.5t-22.5 -9.5h-960q-8 0 -13.5 2t-9 7t-5.5 8t-3 11.5t-1 11.5v13v11v160v416h-192q-26 0 -45 19t-19 45q0 24 15 41l320 384q19 22 49 22t49 -22l320 -384q15 -17 15 -41q0 -26 -19 -45t-45 -19h-192v-384h576q16 0 25 -11l160 -192q7 -10 7 -21 zM1920 448q0 -24 -15 -41l-320 -384q-20 -23 -49 -23t-49 23l-320 384q-15 17 -15 41q0 26 19 45t45 19h192v384h-576q-16 0 -25 12l-160 192q-7 9 -7 20q0 13 9.5 22.5t22.5 9.5h960q8 0 13.5 -2t9 -7t5.5 -8t3 -11.5t1 -11.5v-13v-11v-160v-416h192q26 0 45 -19t19 -45z"/></svg>
<a class="t" style="left:55.5px;top:277px;font-size:18.67px;line-height:25px;color:#fff;letter-spacing:-0.17px;font-weight:400;">Billing Review</a>
<svg class="ic" style="left:19px;top:343.4px;width:25.7px;height:16.6px;" viewBox="0 -1280 1920 1280" preserveAspectRatio="none"><path fill="#fff" transform="scale(1,-1)" d="M768 384h384v96h-128v448h-114l-148 -137l77 -80q42 37 55 57h2v-288h-128v-96zM1280 640q0 -70 -21 -142t-59.5 -134t-101.5 -101t-138 -39t-138 39t-101.5 101t-59.5 134t-21 142t21 142t59.5 134t101.5 101t138 39t138 -39t101.5 -101t59.5 -134t21 -142zM1792 384 v512q-106 0 -181 75t-75 181h-1152q0 -106 -75 -181t-181 -75v-512q106 0 181 -75t75 -181h1152q0 106 75 181t181 75zM1920 1216v-1152q0 -26 -19 -45t-45 -19h-1792q-26 0 -45 19t-19 45v1152q0 26 19 45t45 19h1792q26 0 45 -19t19 -45z"/></svg>
<a class="t" style="left:55.5px;top:341px;font-size:18.67px;line-height:25px;color:#fff;letter-spacing:0.22px;font-weight:400;">Billing</a>
<svg class="ic" style="left:25.4px;top:404.2px;width:13.1px;height:23.1px;" viewBox="45 -1536 933 1792" preserveAspectRatio="none"><path fill="#fff" transform="scale(1,-1)" d="M978 351q0 -153 -99.5 -263.5t-258.5 -136.5v-175q0 -14 -9 -23t-23 -9h-135q-13 0 -22.5 9.5t-9.5 22.5v175q-66 9 -127.5 31t-101.5 44.5t-74 48t-46.5 37.5t-17.5 18q-17 21 -2 41l103 135q7 10 23 12q15 2 24 -9l2 -2q113 -99 243 -125q37 -8 74 -8q81 0 142.5 43 t61.5 122q0 28 -15 53t-33.5 42t-58.5 37.5t-66 32t-80 32.5q-39 16 -61.5 25t-61.5 26.5t-62.5 31t-56.5 35.5t-53.5 42.5t-43.5 49t-35.5 58t-21 66.5t-8.5 78q0 138 98 242t255 134v180q0 13 9.5 22.5t22.5 9.5h135q14 0 23 -9t9 -23v-176q57 -6 110.5 -23t87 -33.5 t63.5 -37.5t39 -29t15 -14q17 -18 5 -38l-81 -146q-8 -15 -23 -16q-14 -3 -27 7q-3 3 -14.5 12t-39 26.5t-58.5 32t-74.5 26t-85.5 11.5q-95 0 -155 -43t-60 -111q0 -26 8.5 -48t29.5 -41.5t39.5 -33t56 -31t60.5 -27t70 -27.5q53 -20 81 -31.5t76 -35t75.5 -42.5t62 -50 t53 -63.5t31.5 -76.5t13 -94z"/></svg>
<a class="t" style="left:55.5px;top:406px;font-size:18.67px;line-height:25px;color:#fff;letter-spacing:-0.07px;font-weight:400;">Invoices</a>
<svg class="ic" style="left:19px;top:472.1px;width:25.7px;height:16.6px;" viewBox="0 -1280 1920 1280" preserveAspectRatio="none"><path fill="#fff" transform="scale(1,-1)" d="M768 384h384v96h-128v448h-114l-148 -137l77 -80q42 37 55 57h2v-288h-128v-96zM1280 640q0 -70 -21 -142t-59.5 -134t-101.5 -101t-138 -39t-138 39t-101.5 101t-59.5 134t-21 142t21 142t59.5 134t101.5 101t138 39t138 -39t101.5 -101t59.5 -134t21 -142zM1792 384 v512q-106 0 -181 75t-75 181h-1152q0 -106 -75 -181t-181 -75v-512q106 0 181 -75t75 -181h1152q0 106 75 181t181 75zM1920 1216v-1152q0 -26 -19 -45t-45 -19h-1792q-26 0 -45 19t-19 45v1152q0 26 19 45t45 19h1792q26 0 45 -19t19 -45z"/></svg>
<a class="t" style="left:55.5px;top:470px;font-size:18.67px;line-height:25px;color:#fff;letter-spacing:-0.05px;font-weight:400;">Payments</a>
<svg class="ic" style="left:20.2px;top:533.2px;width:22.1px;height:23.2px;" viewBox="0 -1536 1664 1792" preserveAspectRatio="none"><path fill="#fff" transform="scale(1,-1)" d="M384 0q0 53 -37.5 90.5t-90.5 37.5t-90.5 -37.5t-37.5 -90.5t37.5 -90.5t90.5 -37.5t90.5 37.5t37.5 90.5zM768 0q0 53 -37.5 90.5t-90.5 37.5t-90.5 -37.5t-37.5 -90.5t37.5 -90.5t90.5 -37.5t90.5 37.5t37.5 90.5zM384 384q0 53 -37.5 90.5t-90.5 37.5t-90.5 -37.5 t-37.5 -90.5t37.5 -90.5t90.5 -37.5t90.5 37.5t37.5 90.5zM1152 0q0 53 -37.5 90.5t-90.5 37.5t-90.5 -37.5t-37.5 -90.5t37.5 -90.5t90.5 -37.5t90.5 37.5t37.5 90.5zM768 384q0 53 -37.5 90.5t-90.5 37.5t-90.5 -37.5t-37.5 -90.5t37.5 -90.5t90.5 -37.5t90.5 37.5 t37.5 90.5zM384 768q0 53 -37.5 90.5t-90.5 37.5t-90.5 -37.5t-37.5 -90.5t37.5 -90.5t90.5 -37.5t90.5 37.5t37.5 90.5zM1152 384q0 53 -37.5 90.5t-90.5 37.5t-90.5 -37.5t-37.5 -90.5t37.5 -90.5t90.5 -37.5t90.5 37.5t37.5 90.5zM768 768q0 53 -37.5 90.5t-90.5 37.5 t-90.5 -37.5t-37.5 -90.5t37.5 -90.5t90.5 -37.5t90.5 37.5t37.5 90.5zM1536 0v384q0 52 -38 90t-90 38t-90 -38t-38 -90v-384q0 -52 38 -90t90 -38t90 38t38 90zM1152 768q0 53 -37.5 90.5t-90.5 37.5t-90.5 -37.5t-37.5 -90.5t37.5 -90.5t90.5 -37.5t90.5 37.5t37.5 90.5z M1536 1088v256q0 26 -19 45t-45 19h-1280q-26 0 -45 -19t-19 -45v-256q0 -26 19 -45t45 -19h1280q26 0 45 19t19 45zM1536 768q0 53 -37.5 90.5t-90.5 37.5t-90.5 -37.5t-37.5 -90.5t37.5 -90.5t90.5 -37.5t90.5 37.5t37.5 90.5zM1664 1408v-1536q0 -52 -38 -90t-90 -38 h-1408q-52 0 -90 38t-38 90v1536q0 52 38 90t90 38h1408q52 0 90 -38t38 -90z"/></svg>
<a class="t" style="left:55.5px;top:535px;font-size:18.67px;line-height:25px;color:#fff;letter-spacing:0.19px;font-weight:400;">Reimbursements</a>
<svg class="ic" style="left:25.4px;top:598.5px;width:13.1px;height:22.7px;" viewBox="45 -1536 933 1792" preserveAspectRatio="none"><path fill="#fff" transform="scale(1,-1)" d="M978 351q0 -153 -99.5 -263.5t-258.5 -136.5v-175q0 -14 -9 -23t-23 -9h-135q-13 0 -22.5 9.5t-9.5 22.5v175q-66 9 -127.5 31t-101.5 44.5t-74 48t-46.5 37.5t-17.5 18q-17 21 -2 41l103 135q7 10 23 12q15 2 24 -9l2 -2q113 -99 243 -125q37 -8 74 -8q81 0 142.5 43 t61.5 122q0 28 -15 53t-33.5 42t-58.5 37.5t-66 32t-80 32.5q-39 16 -61.5 25t-61.5 26.5t-62.5 31t-56.5 35.5t-53.5 42.5t-43.5 49t-35.5 58t-21 66.5t-8.5 78q0 138 98 242t255 134v180q0 13 9.5 22.5t22.5 9.5h135q14 0 23 -9t9 -23v-176q57 -6 110.5 -23t87 -33.5 t63.5 -37.5t39 -29t15 -14q17 -18 5 -38l-81 -146q-8 -15 -23 -16q-14 -3 -27 7q-3 3 -14.5 12t-39 26.5t-58.5 32t-74.5 26t-85.5 11.5q-95 0 -155 -43t-60 -111q0 -26 8.5 -48t29.5 -41.5t39.5 -33t56 -31t60.5 -27t70 -27.5q53 -20 81 -31.5t76 -35t75.5 -42.5t62 -50 t53 -63.5t31.5 -76.5t13 -94z"/></svg>
<a class="t" style="left:55.8px;top:599px;font-size:18.67px;line-height:25px;color:#fff;letter-spacing:0.08px;font-weight:400;">Vendor Bills</a>
<svg class="ic" style="left:20.7px;top:663px;width:22.5px;height:21px;" viewBox="0 -1472 1664 1600" preserveAspectRatio="none"><path fill="#fff" transform="scale(1,-1)" d="M1280 64q0 26 -19 45t-45 19t-45 -19t-19 -45t19 -45t45 -19t45 19t19 45zM1536 64q0 26 -19 45t-45 19t-45 -19t-19 -45t19 -45t45 -19t45 19t19 45zM1664 288v-320q0 -40 -28 -68t-68 -28h-1472q-40 0 -68 28t-28 68v320q0 40 28 68t68 28h427q21 -56 70.5 -92 t110.5 -36h256q61 0 110.5 36t70.5 92h427q40 0 68 -28t28 -68zM1339 936q-17 -40 -59 -40h-256v-448q0 -26 -19 -45t-45 -19h-256q-26 0 -45 19t-19 45v448h-256q-42 0 -59 40q-17 39 14 69l448 448q18 19 45 19t45 -19l448 -448q31 -30 14 -69z"/></svg>
<a class="t" style="left:55.8px;top:664px;font-size:18.67px;line-height:25px;color:#fff;letter-spacing:-0.18px;font-weight:400;">Xero</a>
<svg class="ic" style="left:20.7px;top:727.9px;width:22.5px;height:21.4px;" viewBox="0 -1472 1664 1600" preserveAspectRatio="none"><path fill="#fff" transform="scale(1,-1)" d="M1280 64q0 26 -19 45t-45 19t-45 -19t-19 -45t19 -45t45 -19t45 19t19 45zM1536 64q0 26 -19 45t-45 19t-45 -19t-19 -45t19 -45t45 -19t45 19t19 45zM1664 288v-320q0 -40 -28 -68t-68 -28h-1472q-40 0 -68 28t-28 68v320q0 40 28 68t68 28h427q21 -56 70.5 -92 t110.5 -36h256q61 0 110.5 36t70.5 92h427q40 0 68 -28t28 -68zM1339 936q-17 -40 -59 -40h-256v-448q0 -26 -19 -45t-45 -19h-256q-26 0 -45 19t-19 45v448h-256q-42 0 -59 40q-17 39 14 69l448 448q18 19 45 19t45 -19l448 -448q31 -30 14 -69z"/></svg>
<a class="t" style="left:56.5px;top:728px;font-size:18.67px;line-height:25px;color:#fff;letter-spacing:-0.09px;font-weight:400;">QuickBooks</a>
<svg class="ic" style="left:268px;top:284.7px;width:10.5px;height:6.7px;" viewBox="77 -883 998 582" preserveAspectRatio="none"><path fill="#fff" transform="scale(1,-1)" d="M1075 800q0 -13 -10 -23l-466 -466q-10 -10 -23 -10t-23 10l-466 466q-10 10 -10 23t10 23l50 50q10 10 23 10t23 -10l393 -393l393 393q10 10 23 10t23 -10l50 -50q10 -10 10 -23z"/></svg>
<svg class="ic" style="left:268px;top:671.6px;width:10.5px;height:6.9px;" viewBox="77 -883 998 582" preserveAspectRatio="none"><path fill="#fff" transform="scale(1,-1)" d="M1075 800q0 -13 -10 -23l-466 -466q-10 -10 -23 -10t-23 10l-466 466q-10 10 -10 23t10 23l50 50q10 10 23 10t23 -10l393 -393l393 393q10 10 23 10t23 -10l50 -50q10 -10 10 -23z"/></svg>
<svg class="ic" style="left:268px;top:736.2px;width:10.5px;height:7px;" viewBox="77 -883 998 582" preserveAspectRatio="none"><path fill="#fff" transform="scale(1,-1)" d="M1075 800q0 -13 -10 -23l-466 -466q-10 -10 -23 -10t-23 10l-466 466q-10 10 -10 23t10 23l50 50q10 10 23 10t23 -10l393 -393l393 393q10 10 23 10t23 -10l50 -50q10 -10 10 -23z"/></svg>
</aside>
<header id="hdr">
<svg class="ic" style="left:0;top:0;width:376px;height:63px" viewBox="0 0 376 63"><defs><linearGradient id="wf" gradientUnits="userSpaceOnUse" x1="170" y1="0" x2="258" y2="-105"><stop offset="0" stop-color="#fff" stop-opacity=".2"/><stop offset=".35" stop-color="#fff" stop-opacity=".15"/><stop offset="1" stop-color="#fff" stop-opacity="0"/></linearGradient></defs><g fill="none" stroke="url(#wf)" stroke-width="2"><polyline points="-4,-148.6 2,-148.6 8,-148.6 14,-148.6 20,-148.6 26,-148.6 32,-148.6 38,-148.6 44,-148.6 50,-148.6 56,-148.6 62,-148.6 68,-148.6 74,-148.6 80,-148.6 86,-148.6 92,-148.6 98,-148.6 104,-148.6 110,-148.6 116,-148.6 122,-148.6 128,-148.6 134,-148.6 140,-148.6 146,-148.6 152,-148.6 158,-148.6 164,-148.6 170,-148.6 176,-148.6 182,-148.6 188,-148.6 194,-148.6 200,-148.54 206,-148.34 212,-147.92 218,-147.22 224,-146.19 230,-144.82 236,-143.07 242,-140.98 248,-138.54 254,-135.81 260,-132.84 266,-129.69 272,-126.46 278,-123.22 284,-119.98 290,-116.74 296,-113.5 302,-110.26 308,-107.02 314,-103.78 320,-100.54 326,-97.3 332,-94.06 338,-90.82 344,-87.58 350,-84.34 356,-81.1 362,-77.86 368,-74.62 374,-71.4"/><polyline points="-4,-141.6 2,-141.6 8,-141.6 14,-141.6 20,-141.6 26,-141.6 32,-141.6 38,-141.6 44,-141.6 50,-141.6 56,-141.6 62,-141.6 68,-141.6 74,-141.6 80,-141.6 86,-141.6 92,-141.6 98,-141.6 104,-141.6 110,-141.6 116,-141.6 122,-141.6 128,-141.6 134,-141.6 140,-141.6 146,-141.6 152,-141.6 158,-141.6 164,-141.6 170,-141.6 176,-141.6 182,-141.6 188,-141.59 194,-141.5 200,-141.23 206,-140.72 212,-139.92 218,-138.77 224,-137.28 230,-135.41 236,-133.2 242,-130.66 248,-127.84 254,-124.8 260,-121.62 266,-118.38 272,-115.14 278,-111.9 284,-108.66 290,-105.42 296,-102.18 302,-98.94 308,-95.7 314,-92.46 320,-89.22 326,-85.98 332,-82.74 338,-79.5 344,-76.26 350,-73.02 356,-69.78 362,-66.55 368,-63.34 374,-60.16"/><polyline points="-4,-134.6 2,-134.6 8,-134.6 14,-134.6 20,-134.6 26,-134.6 32,-134.6 38,-134.6 44,-134.6 50,-134.6 56,-134.6 62,-134.6 68,-134.6 74,-134.6 80,-134.6 86,-134.6 92,-134.6 98,-134.6 104,-134.6 110,-134.6 116,-134.6 122,-134.6 128,-134.6 134,-134.6 140,-134.6 146,-134.6 152,-134.6 158,-134.6 164,-134.6 170,-134.6 176,-134.6 182,-134.57 188,-134.43 194,-134.09 200,-133.49 206,-132.57 212,-131.31 218,-129.69 224,-127.71 230,-125.39 236,-122.75 242,-119.85 248,-116.75 254,-113.54 260,-110.3 266,-107.06 272,-103.82 278,-100.58 284,-97.34 290,-94.1 296,-90.86 302,-87.62 308,-84.38 314,-81.14 320,-77.9 326,-74.66 332,-71.42 338,-68.18 344,-64.94 350,-61.7 356,-58.48 362,-55.28 368,-52.11 374,-49.01"/><polyline points="-4,-127.6 2,-127.6 8,-127.6 14,-127.6 20,-127.6 26,-127.6 32,-127.6 38,-127.6 44,-127.6 50,-127.6 56,-127.6 62,-127.6 68,-127.6 74,-127.6 80,-127.6 86,-127.6 92,-127.6 98,-127.6 104,-127.6 110,-127.6 116,-127.6 122,-127.6 128,-127.6 134,-127.6 140,-127.6 146,-127.6 152,-127.6 158,-127.6 164,-127.6 170,-127.6 176,-127.54 182,-127.34 188,-126.92 194,-126.22 200,-125.19 206,-123.82 212,-122.07 218,-119.98 224,-117.54 230,-114.81 236,-111.84 242,-108.69 248,-105.46 254,-102.22 260,-98.98 266,-95.74 272,-92.5 278,-89.26 284,-86.02 290,-82.78 296,-79.54 302,-76.3 308,-73.06 314,-69.82 320,-66.58 326,-63.34 332,-60.1 338,-56.86 344,-53.62 350,-50.4 356,-47.22 362,-44.07 368,-40.98 374,-37.96"/><polyline points="-4,-120.6 2,-120.6 8,-120.6 14,-120.6 20,-120.6 26,-120.6 32,-120.6 38,-120.6 44,-120.6 50,-120.6 56,-120.6 62,-120.6 68,-120.6 74,-120.6 80,-120.6 86,-120.6 92,-120.6 98,-120.6 104,-120.6 110,-120.6 116,-120.6 122,-120.6 128,-120.6 134,-120.6 140,-120.6 146,-120.6 152,-120.6 158,-120.6 164,-120.59 170,-120.5 176,-120.23 182,-119.72 188,-118.92 194,-117.77 200,-116.28 206,-114.41 212,-112.2 218,-109.66 224,-106.84 230,-103.8 236,-100.62 242,-97.38 248,-94.14 254,-90.9 260,-87.66 266,-84.42 272,-81.18 278,-77.94 284,-74.7 290,-71.46 296,-68.22 302,-64.98 308,-61.74 314,-58.5 320,-55.26 326,-52.02 332,-48.78 338,-45.55 344,-42.34 350,-39.16 356,-36.04 362,-32.97 368,-29.97 374,-27.05"/><polyline points="-4,-113.6 2,-113.6 8,-113.6 14,-113.6 20,-113.6 26,-113.6 32,-113.6 38,-113.6 44,-113.6 50,-113.6 56,-113.6 62,-113.6 68,-113.6 74,-113.6 80,-113.6 86,-113.6 92,-113.6 98,-113.6 104,-113.6 110,-113.6 116,-113.6 122,-113.6 128,-113.6 134,-113.6 140,-113.6 146,-113.6 152,-113.6 158,-113.57 164,-113.43 170,-113.09 176,-112.49 182,-111.57 188,-110.31 194,-108.69 200,-106.71 206,-104.39 212,-101.75 218,-98.85 224,-95.75 230,-92.54 236,-89.3 242,-86.06 248,-82.82 254,-79.58 260,-76.34 266,-73.1 272,-69.86 278,-66.62 284,-63.38 290,-60.14 296,-56.9 302,-53.66 308,-50.42 314,-47.18 320,-43.94 326,-40.7 332,-37.48 338,-34.28 344,-31.11 350,-28.01 356,-24.96 362,-21.99 368,-19.1 374,-16.3"/><polyline points="-4,-106.6 2,-106.6 8,-106.6 14,-106.6 20,-106.6 26,-106.6 32,-106.6 38,-106.6 44,-106.6 50,-106.6 56,-106.6 62,-106.6 68,-106.6 74,-106.6 80,-106.6 86,-106.6 92,-106.6 98,-106.6 104,-106.6 110,-106.6 116,-106.6 122,-106.6 128,-106.6 134,-106.6 140,-106.6 146,-106.6 152,-106.54 158,-106.34 164,-105.92 170,-105.22 176,-104.19 182,-102.82 188,-101.07 194,-98.98 200,-96.54 206,-93.81 212,-90.84 218,-87.69 224,-84.46 230,-81.22 236,-77.98 242,-74.74 248,-71.5 254,-68.26 260,-65.02 266,-61.78 272,-58.54 278,-55.3 284,-52.06 290,-48.82 296,-45.58 302,-42.34 308,-39.1 314,-35.86 320,-32.62 326,-29.4 332,-26.22 338,-23.07 344,-19.98 350,-16.96 356,-14.02 362,-11.16 368,-8.39 374,-5.74"/><polyline points="-4,-99.6 2,-99.6 8,-99.6 14,-99.6 20,-99.6 26,-99.6 32,-99.6 38,-99.6 44,-99.6 50,-99.6 56,-99.6 62,-99.6 68,-99.6 74,-99.6 80,-99.6 86,-99.6 92,-99.6 98,-99.6 104,-99.6 110,-99.6 116,-99.6 122,-99.6 128,-99.6 134,-99.6 140,-99.59 146,-99.5 152,-99.23 158,-98.72 164,-97.92 170,-96.77 176,-95.28 182,-93.41 188,-91.2 194,-88.66 200,-85.84 206,-82.8 212,-79.62 218,-76.38 224,-73.14 230,-69.9 236,-66.66 242,-63.42 248,-60.18 254,-56.94 260,-53.7 266,-50.46 272,-47.22 278,-43.98 284,-40.74 290,-37.5 296,-34.26 302,-31.02 308,-27.78 314,-24.55 320,-21.34 326,-18.16 332,-15.04 338,-11.97 344,-8.97 350,-6.05 356,-3.23 362,-0.5 368,2.13 374,4.64"/><polyline points="-4,-92.6 2,-92.6 8,-92.6 14,-92.6 20,-92.6 26,-92.6 32,-92.6 38,-92.6 44,-92.6 50,-92.6 56,-92.6 62,-92.6 68,-92.6 74,-92.6 80,-92.6 86,-92.6 92,-92.6 98,-92.6 104,-92.6 110,-92.6 116,-92.6 122,-92.6 128,-92.6 134,-92.57 140,-92.43 146,-92.09 152,-91.49 158,-90.57 164,-89.31 170,-87.69 176,-85.71 182,-83.39 188,-80.75 194,-77.85 200,-74.75 206,-71.54 212,-68.3 218,-65.06 224,-61.82 230,-58.58 236,-55.34 242,-52.1 248,-48.86 254,-45.62 260,-42.38 266,-39.14 272,-35.9 278,-32.66 284,-29.42 290,-26.18 296,-22.94 302,-19.7 308,-16.48 314,-13.28 320,-10.11 326,-7.01 332,-3.96 338,-0.99 344,1.9 350,4.7 356,7.39 362,9.98 368,12.45 374,14.8"/><polyline points="-4,-85.6 2,-85.6 8,-85.6 14,-85.6 20,-85.6 26,-85.6 32,-85.6 38,-85.6 44,-85.6 50,-85.6 56,-85.6 62,-85.6 68,-85.6 74,-85.6 80,-85.6 86,-85.6 92,-85.6 98,-85.6 104,-85.6 110,-85.6 116,-85.6 122,-85.6 128,-85.54 134,-85.34 140,-84.92 146,-84.22 152,-83.19 158,-81.82 164,-80.07 170,-77.98 176,-75.54 182,-72.81 188,-69.84 194,-66.69 200,-63.46 206,-60.22 212,-56.98 218,-53.74 224,-50.5 230,-47.26 236,-44.02 242,-40.78 248,-37.54 254,-34.3 260,-31.06 266,-27.82 272,-24.58 278,-21.34 284,-18.1 290,-14.86 296,-11.62 302,-8.4 308,-5.22 314,-2.07 320,1.02 326,4.04 332,6.98 338,9.84 344,12.61 350,15.26 356,17.81 362,20.25 368,22.56 374,24.74"/><polyline points="-4,-78.6 2,-78.6 8,-78.6 14,-78.6 20,-78.6 26,-78.6 32,-78.6 38,-78.6 44,-78.6 50,-78.6 56,-78.6 62,-78.6 68,-78.6 74,-78.6 80,-78.6 86,-78.6 92,-78.6 98,-78.6 104,-78.6 110,-78.6 116,-78.59 122,-78.5 128,-78.23 134,-77.72 140,-76.92 146,-75.77 152,-74.28 158,-72.41 164,-70.2 170,-67.66 176,-64.84 182,-61.8 188,-58.62 194,-55.38 200,-52.14 206,-48.9 212,-45.66 218,-42.42 224,-39.18 230,-35.94 236,-32.7 242,-29.46 248,-26.22 254,-22.98 260,-19.74 266,-16.5 272,-13.26 278,-10.02 284,-6.78 290,-3.55 296,-0.34 302,2.84 308,5.96 314,9.03 320,12.03 326,14.95 332,17.77 338,20.5 344,23.13 350,25.64 356,28.03 362,30.3 368,32.44 374,34.46"/><polyline points="-4,-71.6 2,-71.6 8,-71.6 14,-71.6 20,-71.6 26,-71.6 32,-71.6 38,-71.6 44,-71.6 50,-71.6 56,-71.6 62,-71.6 68,-71.6 74,-71.6 80,-71.6 86,-71.6 92,-71.6 98,-71.6 104,-71.6 110,-71.57 116,-71.43 122,-71.09 128,-70.49 134,-69.57 140,-68.31 146,-66.69 152,-64.71 158,-62.39 164,-59.75 170,-56.85 176,-53.75 182,-50.54 188,-47.3 194,-44.06 200,-40.82 206,-37.58 212,-34.34 218,-31.1 224,-27.86 230,-24.62 236,-21.38 242,-18.14 248,-14.9 254,-11.66 260,-8.42 266,-5.18 272,-1.94 278,1.3 284,4.52 290,7.72 296,10.89 302,13.99 308,17.04 314,20.01 320,22.9 326,25.7 332,28.39 338,30.98 344,33.45 350,35.8 356,38.03 362,40.13 368,42.1 374,43.93"/><polyline points="-4,-64.6 2,-64.6 8,-64.6 14,-64.6 20,-64.6 26,-64.6 32,-64.6 38,-64.6 44,-64.6 50,-64.6 56,-64.6 62,-64.6 68,-64.6 74,-64.6 80,-64.6 86,-64.6 92,-64.6 98,-64.6 104,-64.54 110,-64.34 116,-63.92 122,-63.22 128,-62.19 134,-60.82 140,-59.07 146,-56.98 152,-54.54 158,-51.81 164,-48.84 170,-45.69 176,-42.46 182,-39.22 188,-35.98 194,-32.74 200,-29.5 206,-26.26 212,-23.02 218,-19.78 224,-16.54 230,-13.3 236,-10.06 242,-6.82 248,-3.58 254,-0.34 260,2.9 266,6.14 272,9.38 278,12.6 284,15.78 290,18.93 296,22.02 302,25.04 308,27.98 314,30.84 320,33.61 326,36.26 332,38.81 338,41.25 344,43.56 350,45.74 356,47.8 362,49.72 368,51.51 374,53.17"/><polyline points="-4,-57.6 2,-57.6 8,-57.6 14,-57.6 20,-57.6 26,-57.6 32,-57.6 38,-57.6 44,-57.6 50,-57.6 56,-57.6 62,-57.6 68,-57.6 74,-57.6 80,-57.6 86,-57.6 92,-57.59 98,-57.5 104,-57.23 110,-56.72 116,-55.92 122,-54.77 128,-53.28 134,-51.41 140,-49.2 146,-46.66 152,-43.84 158,-40.8 164,-37.62 170,-34.38 176,-31.14 182,-27.9 188,-24.66 194,-21.42 200,-18.18 206,-14.94 212,-11.7 218,-8.46 224,-5.22 230,-1.98 236,1.26 242,4.5 248,7.74 254,10.98 260,14.22 266,17.45 272,20.66 278,23.84 284,26.96 290,30.03 296,33.03 302,35.95 308,38.77 314,41.5 320,44.13 326,46.64 332,49.03 338,51.3 344,53.44 350,55.46 356,57.33 362,59.08 368,60.69 374,62.16"/><polyline points="-4,-50.6 2,-50.6 8,-50.6 14,-50.6 20,-50.6 26,-50.6 32,-50.6 38,-50.6 44,-50.6 50,-50.6 56,-50.6 62,-50.6 68,-50.6 74,-50.6 80,-50.6 86,-50.57 92,-50.43 98,-50.09 104,-49.49 110,-48.57 116,-47.31 122,-45.69 128,-43.71 134,-41.39 140,-38.75 146,-35.85 152,-32.75 158,-29.54 164,-26.3 170,-23.06 176,-19.82 182,-16.58 188,-13.34 194,-10.1 200,-6.86 206,-3.62 212,-0.38 218,2.86 224,6.1 230,9.34 236,12.58 242,15.82 248,19.06 254,22.3 260,25.52 266,28.72 272,31.89 278,34.99 284,38.04 290,41.01 296,43.9 302,46.7 308,49.39 314,51.98 320,54.45 326,56.8 332,59.03 338,61.13 344,63.1 350,64.93 356,66.63 362,68.19 368,69.62 374,70.92"/><polyline points="-4,-43.6 2,-43.6 8,-43.6 14,-43.6 20,-43.6 26,-43.6 32,-43.6 38,-43.6 44,-43.6 50,-43.6 56,-43.6 62,-43.6 68,-43.6 74,-43.6 80,-43.54 86,-43.34 92,-42.92 98,-42.22 104,-41.19 110,-39.82 116,-38.07 122,-35.98 128,-33.54 134,-30.81 140,-27.84 146,-24.69 152,-21.46 158,-18.22 164,-14.98 170,-11.74 176,-8.5 182,-5.26 188,-2.02 194,1.22 200,4.46 206,7.7 212,10.94 218,14.18 224,17.42 230,20.66 236,23.9 242,27.14 248,30.38 254,33.6 260,36.78 266,39.93 272,43.02 278,46.04 284,48.98 290,51.84 296,54.61 302,57.26 308,59.81 314,62.25 320,64.56 326,66.74 332,68.8 338,70.72 344,72.51 350,74.17 356,75.68 362,77.07 368,78.32 374,79.44"/><polyline points="-4,-36.6 2,-36.6 8,-36.6 14,-36.6 20,-36.6 26,-36.6 32,-36.6 38,-36.6 44,-36.6 50,-36.6 56,-36.6 62,-36.6 68,-36.59 74,-36.5 80,-36.23 86,-35.72 92,-34.92 98,-33.77 104,-32.28 110,-30.41 116,-28.2 122,-25.66 128,-22.84 134,-19.8 140,-16.62 146,-13.38 152,-10.14 158,-6.9 164,-3.66 170,-0.42 176,2.82 182,6.06 188,9.3 194,12.54 200,15.78 206,19.02 212,22.26 218,25.5 224,28.74 230,31.98 236,35.22 242,38.45 248,41.66 254,44.84 260,47.96 266,51.03 272,54.03 278,56.95 284,59.77 290,62.5 296,65.13 302,67.64 308,70.03 314,72.3 320,74.44 326,76.46 332,78.33 338,80.08 344,81.69 350,83.16 356,84.5 362,85.71 368,86.78 374,87.73"/><polyline points="-4,-29.6 2,-29.6 8,-29.6 14,-29.6 20,-29.6 26,-29.6 32,-29.6 38,-29.6 44,-29.6 50,-29.6 56,-29.6 62,-29.57 68,-29.43 74,-29.09 80,-28.49 86,-27.57 92,-26.31 98,-24.69 104,-22.71 110,-20.39 116,-17.75 122,-14.85 128,-11.75 134,-8.54 140,-5.3 146,-2.06 152,1.18 158,4.42 164,7.66 170,10.9 176,14.14 182,17.38 188,20.62 194,23.86 200,27.1 206,30.34 212,33.58 218,36.82 224,40.06 230,43.3 236,46.52 242,49.72 248,52.89 254,55.99 260,59.04 266,62.01 272,64.9 278,67.7 284,70.39 290,72.98 296,75.45 302,77.8 308,80.03 314,82.13 320,84.1 326,85.93 332,87.63 338,89.19 344,90.62 350,91.92 356,93.08 362,94.11 368,95.02 374,95.81"/><polyline points="-4,-22.6 2,-22.6 8,-22.6 14,-22.6 20,-22.6 26,-22.6 32,-22.6 38,-22.6 44,-22.6 50,-22.6 56,-22.54 62,-22.34 68,-21.92 74,-21.22 80,-20.19 86,-18.82 92,-17.07 98,-14.98 104,-12.54 110,-9.81 116,-6.84 122,-3.69 128,-0.46 134,2.78 140,6.02 146,9.26 152,12.5 158,15.74 164,18.98 170,22.22 176,25.46 182,28.7 188,31.94 194,35.18 200,38.42 206,41.66 212,44.9 218,48.14 224,51.38 230,54.6 236,57.78 242,60.93 248,64.02 254,67.04 260,69.98 266,72.84 272,75.61 278,78.26 284,80.81 290,83.25 296,85.56 302,87.74 308,89.8 314,91.72 320,93.51 326,95.17 332,96.68 338,98.07 344,99.32 350,100.44 356,101.43 362,102.3 368,103.04 374,103.68"/><polyline points="-4,-15.6 2,-15.6 8,-15.6 14,-15.6 20,-15.6 26,-15.6 32,-15.6 38,-15.6 44,-15.59 50,-15.5 56,-15.23 62,-14.72 68,-13.92 74,-12.77 80,-11.28 86,-9.41 92,-7.2 98,-4.66 104,-1.84 110,1.2 116,4.38 122,7.62 128,10.86 134,14.1 140,17.34 146,20.58 152,23.82 158,27.06 164,30.3 170,33.54 176,36.78 182,40.02 188,43.26 194,46.5 200,49.74 206,52.98 212,56.22 218,59.45 224,62.66 230,65.84 236,68.96 242,72.03 248,75.03 254,77.95 260,80.77 266,83.5 272,86.13 278,88.64 284,91.03 290,93.3 296,95.44 302,97.46 308,99.33 314,101.08 320,102.69 326,104.16 332,105.5 338,106.71 344,107.78 350,108.73 356,109.56 362,110.27 368,110.87 374,111.36"/><polyline points="-4,-8.6 2,-8.6 8,-8.6 14,-8.6 20,-8.6 26,-8.6 32,-8.6 38,-8.57 44,-8.43 50,-8.09 56,-7.49 62,-6.57 68,-5.31 74,-3.69 80,-1.71 86,0.61 92,3.25 98,6.15 104,9.25 110,12.46 116,15.7 122,18.94 128,22.18 134,25.42 140,28.66 146,31.9 152,35.14 158,38.38 164,41.62 170,44.86 176,48.1 182,51.34 188,54.58 194,57.82 200,61.06 206,64.3 212,67.52 218,70.72 224,73.89 230,76.99 236,80.04 242,83.01 248,85.9 254,88.7 260,91.39 266,93.98 272,96.45 278,98.8 284,101.03 290,103.13 296,105.1 302,106.93 308,108.63 314,110.19 320,111.62 326,112.92 332,114.08 338,115.11 344,116.02 350,116.81 356,117.48 362,118.04 368,118.5 374,118.87"/><polyline points="-4,-1.6 2,-1.6 8,-1.6 14,-1.6 20,-1.6 26,-1.6 32,-1.54 38,-1.34 44,-0.92 50,-0.22 56,0.81 62,2.18 68,3.93 74,6.02 80,8.46 86,11.19 92,14.16 98,17.31 104,20.54 110,23.78 116,27.02 122,30.26 128,33.5 134,36.74 140,39.98 146,43.22 152,46.46 158,49.7 164,52.94 170,56.18 176,59.42 182,62.66 188,65.9 194,69.14 200,72.38 206,75.6 212,78.78 218,81.93 224,85.02 230,88.04 236,90.98 242,93.84 248,96.61 254,99.26 260,101.81 266,104.25 272,106.56 278,108.74 284,110.8 290,112.72 296,114.51 302,116.17 308,117.68 314,119.07 320,120.32 326,121.44 332,122.43 338,123.3 344,124.04 350,124.68 356,125.21 362,125.63 368,125.97 374,126.23"/><polyline points="-4,5.4 2,5.4 8,5.4 14,5.4 20,5.41 26,5.5 32,5.77 38,6.28 44,7.08 50,8.23 56,9.72 62,11.59 68,13.8 74,16.34 80,19.16 86,22.2 92,25.38 98,28.62 104,31.86 110,35.1 116,38.34 122,41.58 128,44.82 134,48.06 140,51.3 146,54.54 152,57.78 158,61.02 164,64.26 170,67.5 176,70.74 182,73.98 188,77.22 194,80.45 200,83.66 206,86.84 212,89.96 218,93.03 224,96.03 230,98.95 236,101.77 242,104.5 248,107.13 254,109.64 260,112.03 266,114.3 272,116.44 278,118.46 284,120.33 290,122.08 296,123.69 302,125.16 308,126.5 314,127.71 320,128.78 326,129.73 332,130.56 338,131.27 344,131.87 350,132.36 356,132.76 362,133.07 368,133.3 374,133.46"/><polyline points="-4,12.4 2,12.4 8,12.4 14,12.43 20,12.57 26,12.91 32,13.51 38,14.43 44,15.69 50,17.31 56,19.29 62,21.61 68,24.25 74,27.15 80,30.25 86,33.46 92,36.7 98,39.94 104,43.18 110,46.42 116,49.66 122,52.9 128,56.14 134,59.38 140,62.62 146,65.86 152,69.1 158,72.34 164,75.58 170,78.82 176,82.06 182,85.3 188,88.52 194,91.72 200,94.89 206,97.99 212,101.04 218,104.01 224,106.9 230,109.7 236,112.39 242,114.98 248,117.45 254,119.8 260,122.03 266,124.13 272,126.1 278,127.93 284,129.63 290,131.19 296,132.62 302,133.92 308,135.08 314,136.11 320,137.02 326,137.81 332,138.48 338,139.04 344,139.5 350,139.87 356,140.15 362,140.36 368,140.5 374,140.58"/><polyline points="-4,19.4 2,19.4 8,19.46 14,19.66 20,20.08 26,20.78 32,21.81 38,23.18 44,24.93 50,27.02 56,29.46 62,32.19 68,35.16 74,38.31 80,41.54 86,44.78 92,48.02 98,51.26 104,54.5 110,57.74 116,60.98 122,64.22 128,67.46 134,70.7 140,73.94 146,77.18 152,80.42 158,83.66 164,86.9 170,90.14 176,93.38 182,96.6 188,99.78 194,102.93 200,106.02 206,109.04 212,111.98 218,114.84 224,117.61 230,120.26 236,122.81 242,125.25 248,127.56 254,129.74 260,131.8 266,133.72 272,135.51 278,137.17 284,138.68 290,140.07 296,141.32 302,142.44 308,143.43 314,144.3 320,145.04 326,145.68 332,146.21 338,146.63 344,146.97 350,147.23 356,147.41 362,147.53 368,147.6 374,147.64"/><polyline points="-4,26.41 2,26.5 8,26.77 14,27.28 20,28.08 26,29.23 32,30.72 38,32.59 44,34.8 50,37.34 56,40.16 62,43.2 68,46.38 74,49.62 80,52.86 86,56.1 92,59.34 98,62.58 104,65.82 110,69.06 116,72.3 122,75.54 128,78.78 134,82.02 140,85.26 146,88.5 152,91.74 158,94.98 164,98.22 170,101.45 176,104.66 182,107.84 188,110.96 194,114.03 200,117.03 206,119.95 212,122.77 218,125.5 224,128.13 230,130.64 236,133.03 242,135.3 248,137.44 254,139.46 260,141.33 266,143.08 272,144.69 278,146.16 284,147.5 290,148.71 296,149.78 302,150.73 308,151.56 314,152.27 320,152.87 326,153.36 332,153.76 338,154.07 344,154.3 350,154.46 356,154.56 362,154.62 368,154.64 374,154.65"/><polyline points="-4,33.57 2,33.91 8,34.51 14,35.43 20,36.69 26,38.31 32,40.29 38,42.61 44,45.25 50,48.15 56,51.25 62,54.46 68,57.7 74,60.94 80,64.18 86,67.42 92,70.66 98,73.9 104,77.14 110,80.38 116,83.62 122,86.86 128,90.1 134,93.34 140,96.58 146,99.82 152,103.06 158,106.3 164,109.52 170,112.72 176,115.89 182,118.99 188,122.04 194,125.01 200,127.9 206,130.7 212,133.39 218,135.98 224,138.45 230,140.8 236,143.03 242,145.13 248,147.1 254,148.93 260,150.63 266,152.19 272,153.62 278,154.92 284,156.08 290,157.11 296,158.02 302,158.81 308,159.48 314,160.04 320,160.5 326,160.87 332,161.15 338,161.36 344,161.5 350,161.58 356,161.63 362,161.65 368,161.65 374,161.65"/><polyline points="-4,41.08 2,41.78 8,42.81 14,44.18 20,45.93 26,48.02 32,50.46 38,53.19 44,56.16 50,59.31 56,62.54 62,65.78 68,69.02 74,72.26 80,75.5 86,78.74 92,81.98 98,85.22 104,88.46 110,91.7 116,94.94 122,98.18 128,101.42 134,104.66 140,107.9 146,111.14 152,114.38 158,117.6 164,120.78 170,123.93 176,127.02 182,130.04 188,132.98 194,135.84 200,138.61 206,141.26 212,143.81 218,146.25 224,148.56 230,150.74 236,152.8 242,154.72 248,156.51 254,158.17 260,159.68 266,161.07 272,162.32 278,163.44 284,164.43 290,165.3 296,166.04 302,166.68 308,167.21 314,167.63 320,167.97 326,168.23 332,168.41 338,168.53 344,168.6 350,168.64 356,168.65 362,168.65 368,168.65 374,168.65"/><polyline points="-4,49.08 2,50.23 8,51.72 14,53.59 20,55.8 26,58.34 32,61.16 38,64.2 44,67.38 50,70.62 56,73.86 62,77.1 68,80.34 74,83.58 80,86.82 86,90.06 92,93.3 98,96.54 104,99.78 110,103.02 116,106.26 122,109.5 128,112.74 134,115.98 140,119.22 146,122.45 152,125.66 158,128.84 164,131.96 170,135.03 176,138.03 182,140.95 188,143.77 194,146.5 200,149.13 206,151.64 212,154.03 218,156.3 224,158.44 230,160.46 236,162.33 242,164.08 248,165.69 254,167.16 260,168.5 266,169.71 272,170.78 278,171.73 284,172.56 290,173.27 296,173.87 302,174.36 308,174.76 314,175.07 320,175.3 326,175.46 332,175.56 338,175.62 344,175.64 350,175.65 356,175.65 362,175.65 368,175.65 374,175.65"/><polyline points="-4,57.69 2,59.31 8,61.29 14,63.61 20,66.25 26,69.15 32,72.25 38,75.46 44,78.7 50,81.94 56,85.18 62,88.42 68,91.66 74,94.9 80,98.14 86,101.38 92,104.62 98,107.86 104,111.1 110,114.34 116,117.58 122,120.82 128,124.06 134,127.3 140,130.52 146,133.72 152,136.89 158,139.99 164,143.04 170,146.01 176,148.9 182,151.7 188,154.39 194,156.98 200,159.45 206,161.8 212,164.03 218,166.13 224,168.1 230,169.93 236,171.63 242,173.19 248,174.62 254,175.92 260,177.08 266,178.11 272,179.02 278,179.81 284,180.48 290,181.04 296,181.5 302,181.87 308,182.15 314,182.36 320,182.5 326,182.58 332,182.63 338,182.65 344,182.65 350,182.65 356,182.65 362,182.65 368,182.65 374,182.65"/><polyline points="-4,66.93 2,69.02 8,71.46 14,74.19 20,77.16 26,80.31 32,83.54 38,86.78 44,90.02 50,93.26 56,96.5 62,99.74 68,102.98 74,106.22 80,109.46 86,112.7 92,115.94 98,119.18 104,122.42 110,125.66 116,128.9 122,132.14 128,135.38 134,138.6 140,141.78 146,144.93 152,148.02 158,151.04 164,153.98 170,156.84 176,159.61 182,162.26 188,164.81 194,167.25 200,169.56 206,171.74 212,173.8 218,175.72 224,177.51 230,179.17 236,180.68 242,182.07 248,183.32 254,184.44 260,185.43 266,186.3 272,187.04 278,187.68 284,188.21 290,188.63 296,188.97 302,189.23 308,189.41 314,189.53 320,189.6 326,189.64 332,189.65 338,189.65 344,189.65 350,189.65 356,189.65 362,189.65 368,189.65 374,189.65"/><polyline points="-4,76.8 2,79.34 8,82.16 14,85.2 20,88.38 26,91.62 32,94.86 38,98.1 44,101.34 50,104.58 56,107.82 62,111.06 68,114.3 74,117.54 80,120.78 86,124.02 92,127.26 98,130.5 104,133.74 110,136.98 116,140.22 122,143.45 128,146.66 134,149.84 140,152.96 146,156.03 152,159.03 158,161.95 164,164.77 170,167.5 176,170.13 182,172.64 188,175.03 194,177.3 200,179.44 206,181.46 212,183.33 218,185.08 224,186.69 230,188.16 236,189.5 242,190.71 248,191.78 254,192.73 260,193.56 266,194.27 272,194.87 278,195.36 284,195.76 290,196.07 296,196.3 302,196.46 308,196.56 314,196.62 320,196.64 326,196.65 332,196.65 338,196.65 344,196.65 350,196.65 356,196.65 362,196.65 368,196.65 374,196.65"/></g><linearGradient id="wx" gradientUnits="userSpaceOnUse" x1="268" y1="0" x2="352" y2="0"><stop offset="0" stop-color="#2f6e91" stop-opacity="0"/><stop offset="1" stop-color="#2f6e91"/></linearGradient><rect x="268" y="0" width="110" height="63" fill="url(#wx)"/></svg>
<svg class="ic" style="left:20.6px;top:17.6px;width:21.4px;height:17.6px;" viewBox="0 -1280 1536 1280" preserveAspectRatio="none"><path fill="#fff" transform="scale(1,-1)" d="M1536 192v-128q0 -26 -19 -45t-45 -19h-1408q-26 0 -45 19t-19 45v128q0 26 19 45t45 19h1408q26 0 45 -19t19 -45zM1536 704v-128q0 -26 -19 -45t-45 -19h-1408q-26 0 -45 19t-19 45v128q0 26 19 45t45 19h1408q26 0 45 -19t19 -45zM1536 1216v-128q0 -26 -19 -45 t-45 -19h-1408q-26 0 -45 19t-19 45v128q0 26 19 45t45 19h1408q26 0 45 -19t19 -45z"/></svg>
<svg class="ic" style="left:100.6px;top:13.5px;width:31.7px;height:23.9px;overflow:visible" viewBox="0 0 31.7 23.9"><defs><linearGradient id="hp" x1="0" x2="0" y1="0" y2="1"><stop offset="0" stop-color="#fde3d0"/><stop offset=".4" stop-color="#f69a7b"/><stop offset=".75" stop-color="#ec3a22"/><stop offset="1" stop-color="#e8251f"/></linearGradient><linearGradient id="hl" x1="0" x2="0" y1="0" y2="1"><stop offset="0" stop-color="#f2553a"/><stop offset=".6" stop-color="#ea2c1f"/><stop offset="1" stop-color="#e8251f"/></linearGradient></defs><path fill="url(#hl)" d="M15.2 18.4 C16.31 12.38 17.21 -1.69 11.2 0 C7.29 0.46 12.55 13.2 15.2 18.4Z"/><path fill="url(#hp)" d="M16.5 18.4 C19.15 13.2 24.41 0.46 20.5 0 C14.49 -1.69 15.39 12.38 16.5 18.4Z"/><path fill="#ea2c1f" d="M14.2 18.9 C12.37 13.36 6.71 1.1 2.6 5 C-1.31 7.79 9.33 15.89 14.2 18.9Z"/><path fill="#ea2c1f" d="M17.5 18.9 C22.37 15.89 33.01 7.79 29.1 5 C24.99 1.1 19.33 13.36 17.5 18.9Z"/><path fill="#e4291f" d="M13.5 20 C10.29 16.29 1.93 8.61 0 13 C-2.41 16.98 8.64 19.46 13.5 20Z"/><path fill="#e4291f" d="M18.2 20 C23.06 19.46 34.11 16.98 31.7 13 C29.77 8.61 21.41 16.29 18.2 20Z"/><path fill="#cf2a2a" d="M12.9 20.9 C9.87 21.08 2.65 21.78 3 22.6 C3.64 27.49 10.25 23.25 12.9 20.9Z"/><path fill="#cf2a2a" d="M18.8 20.9 C21.45 23.25 28.06 27.49 28.7 22.6 C29.05 21.78 21.83 21.08 18.8 20.9Z"/></svg>
<div class="t" style="left:136.3px;top:19.5px;font-size:13.8px;line-height:18px;font-weight:700;color:#231815;transform:scaleX(1.195);transform-origin:0 0">HUAWEI</div>
<div class="abs" style="left:667px;top:0;width:119px;height:63px;background:#1d4d6e"></div>
<div class="abs" style="left:665px;top:1px;width:125px;height:62px;border:5px solid #ed1c24"></div>
<nav>
<a class="t" style="left:337.3px;top:14px;font-size:18.67px;line-height:25px;color:#fff;letter-spacing:0.77px;font-weight:400;">Home</a>
<a class="t" style="left:442.5px;top:14px;font-size:18.67px;line-height:25px;color:#fff;letter-spacing:-0.27px;font-weight:400;">Service Desk</a>
<a class="t" style="left:603.6px;top:14px;font-size:18.67px;line-height:25px;color:#fff;letter-spacing:-1.42px;font-weight:400;">CRM</a>
<a class="t" style="left:695.5px;top:14px;font-size:18.67px;line-height:25px;color:#fff;letter-spacing:0.08px;font-weight:400;">Finance</a>
<a class="t" style="left:814.7px;top:14px;font-size:18.67px;line-height:25px;color:#fff;letter-spacing:0.26px;font-weight:400;">Projects</a>
<a class="t" style="left:936.6px;top:14px;font-size:18.67px;line-height:25px;color:#fff;letter-spacing:0.32px;font-weight:400;">Reports</a>
<a class="t" style="left:1056.4px;top:14px;font-size:18.67px;line-height:25px;color:#fff;letter-spacing:-1.17px;font-weight:400;">HR</a>
<a class="t" style="left:1134.4px;top:14px;font-size:18.67px;line-height:25px;color:#fff;letter-spacing:0.54px;font-weight:400;">Inventory</a>
<a class="t" style="left:1269.5px;top:14px;font-size:18.67px;line-height:25px;color:#fff;letter-spacing:0.8px;font-weight:400;">Admin</a>
</nav>
<svg class="ic" style="left:1439px;top:17px;width:23.9px;height:19.2px;" viewBox="0 -1280 1792 1408" preserveAspectRatio="none"><path fill="#fff" transform="scale(1,-1)" d="M1792 826v-794q0 -66 -47 -113t-113 -47h-1472q-66 0 -113 47t-47 113v794q44 -49 101 -87q362 -246 497 -345q57 -42 92.5 -65.5t94.5 -48t110 -24.5h1h1q51 0 110 24.5t94.5 48t92.5 65.5q170 123 498 345q57 39 100 87zM1792 1120q0 -79 -49 -151t-122 -123 q-376 -261 -468 -325q-10 -7 -42.5 -30.5t-54 -38t-52 -32.5t-57.5 -27t-50 -9h-1h-1q-23 0 -50 9t-57.5 27t-52 32.5t-54 38t-42.5 30.5q-91 64 -262 182.5t-205 142.5q-62 42 -117 115.5t-55 136.5q0 78 41.5 130t118.5 52h1472q65 0 112.5 -47t47.5 -113z"/></svg>
<svg class="ic" style="left:1510.6px;top:14.2px;width:21.4px;height:23px;" viewBox="64 -1536 1664 1792" preserveAspectRatio="none"><path fill="#fff" stroke="#fff" stroke-width="42" transform="scale(1,-1)" d="M912 -160q0 16 -16 16q-59 0 -101.5 42.5t-42.5 101.5q0 16 -16 16t-16 -16q0 -73 51.5 -124.5t124.5 -51.5q16 0 16 16zM246 128h1300q-266 300 -266 832q0 51 -24 105t-69 103t-121.5 80.5t-169.5 31.5t-169.5 -31.5t-121.5 -80.5t-69 -103t-24 -105q0 -532 -266 -832z M1728 128q0 -52 -38 -90t-90 -38h-448q0 -106 -75 -181t-181 -75t-181 75t-75 181h-448q-52 0 -90 38t-38 90q50 42 91 88t85 119.5t74.5 158.5t50 206t19.5 260q0 152 117 282.5t307 158.5q-8 19 -8 39q0 40 28 68t68 28t68 -28t28 -68q0 -20 -8 -39q190 -28 307 -158.5 t117 -282.5q0 -139 19.5 -260t50 -206t74.5 -158.5t85 -119.5t91 -88z"/></svg>
<svg class="ic" style="left:1581px;top:15.5px;width:21.6px;height:21.5px;" viewBox="0 -1408 1536 1536" preserveAspectRatio="none"><path fill="#fff" transform="scale(1,-1)" d="M896 160v192q0 14 -9 23t-23 9h-192q-14 0 -23 -9t-9 -23v-192q0 -14 9 -23t23 -9h192q14 0 23 9t9 23zM1152 832q0 88 -55.5 163t-138.5 116t-170 41q-243 0 -371 -213q-15 -24 8 -42l132 -100q7 -6 19 -6q16 0 25 12q53 68 86 92q34 24 86 24q48 0 85.5 -26t37.5 -59 q0 -38 -20 -61t-68 -45q-63 -28 -115.5 -86.5t-52.5 -125.5v-36q0 -14 9 -23t23 -9h192q14 0 23 9t9 23q0 19 21.5 49.5t54.5 49.5q32 18 49 28.5t46 35t44.5 48t28 60.5t12.5 81zM1536 640q0 -209 -103 -385.5t-279.5 -279.5t-385.5 -103t-385.5 103t-279.5 279.5 t-103 385.5t103 385.5t279.5 279.5t385.5 103t385.5 -103t279.5 -279.5t103 -385.5z"/></svg>
<svg class="ic" style="left:1644.6px;top:7.6px;width:36.8px;height:36.8px" viewBox="0 0 40 40"><defs><clipPath id="av"><circle cx="20" cy="20" r="20"/></clipPath></defs><circle cx="20" cy="20" r="20" fill="#f5f5f5"/><g clip-path="url(#av)" fill="#bdbdbd"><ellipse cx="20" cy="12.6" rx="7.4" ry="9.2"/><path d="M15.5 18 h9 v6.2 c2.2 2.3 8 2.3 12.5 4.6 c2.5 1.3 3 4 3 6 v6 h-40 v-6 c0-2 .5-4.7 3-6 c4.500-2.3 10.300-2.3 12.500-4.600z"/></g></svg>
<div class="abs" style="left:1696px;top:20.8px;width:52px;height:3px;background:repeating-linear-gradient(90deg,#fff 0 5px,transparent 5px 8px);opacity:.9"></div>
<div class="abs" style="left:1748.6px;top:20.8px;width:2.2px;height:12px;background:#fff"></div>
<div class="abs" style="left:1696px;top:22px;width:52.8px;height:12px;background:#808080"></div>
<svg class="ic" style="left:1763px;top:22.8px;width:18.2px;height:9.4px;" viewBox="0 -896 1024 576" preserveAspectRatio="none"><path fill="#fff" transform="scale(1,-1)" d="M1024 832q0 -26 -19 -45l-448 -448q-19 -19 -45 -19t-45 19l-448 448q-19 19 -19 45t19 45t45 19h896q26 0 45 -19t19 -45z"/></svg>
<div class="abs" style="left:1822.2px;top:7.5px;width:35.8px;height:36.9px;background:#fff;border-radius:3px"></div>
<div class="t" style="left:1828.5px;top:10px;font-size:30px;line-height:34px;font-weight:700;color:#2f6e91;transform:scaleX(1.35);transform-origin:11.1px 0;clip-path:polygon(0 0,20px 0,20px 23.3px,11.2px 23.3px,11.2px 29px,6.9px 29px,6.9px 23.3px,0 23.3px)">1</div>
<div class="t" style="left:1831.6px;top:10px;font-size:30px;line-height:34px;font-weight:700;color:#2f6e91">K</div>
</header>
<div id="edge"><div class="abs" style="left:1.6px;top:13px;width:1.4px;height:590px;background:#b9b9b9"></div></div>
</body></html>
